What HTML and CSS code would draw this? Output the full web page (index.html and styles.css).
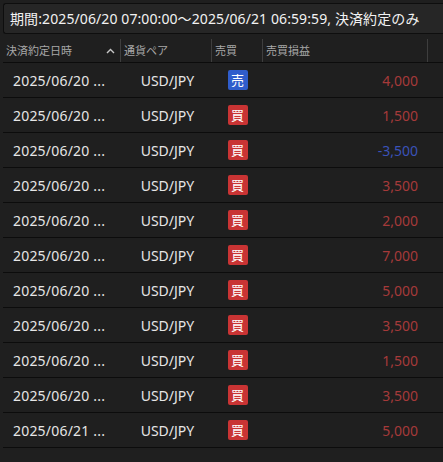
FILE: index.html
```html
<!DOCTYPE html>
<html lang="ja">
<head>
<meta charset="utf-8">
<link rel="stylesheet" href="styles.css">
</head>
<body>
<div class="page">
  <div class="filter">期間:2025/06/20 07:00:00〜2025/06/21 06:59:59, 決済約定のみ</div>
  <div class="table">
    <div class="row head">
      <div class="hc c1"><span>決済約定日時</span><svg class="sort" width="9" height="6" viewBox="0 0 9 6"><path d="M1 5 L4.5 1.5 L8 5" fill="none" stroke="#c8c8c8" stroke-width="1.4"/></svg></div>
      <div class="hc">通貨ペア</div>
      <div class="hc">売買</div>
      <div class="hc">売買損益</div>
      <div class="hc last"></div>
    </div>
    <div class="row"><div class="c date">2025/06/20 ...</div><div class="c pair">USD/JPY</div><div class="c side"><span class="badge sell">売</span></div><div class="c pl red">4,000</div><div class="c"></div></div>
    <div class="row"><div class="c date">2025/06/20 ...</div><div class="c pair">USD/JPY</div><div class="c side"><span class="badge buy">買</span></div><div class="c pl red">1,500</div><div class="c"></div></div>
    <div class="row"><div class="c date">2025/06/20 ...</div><div class="c pair">USD/JPY</div><div class="c side"><span class="badge buy">買</span></div><div class="c pl blue">-3,500</div><div class="c"></div></div>
    <div class="row"><div class="c date">2025/06/20 ...</div><div class="c pair">USD/JPY</div><div class="c side"><span class="badge buy">買</span></div><div class="c pl red">3,500</div><div class="c"></div></div>
    <div class="row"><div class="c date">2025/06/20 ...</div><div class="c pair">USD/JPY</div><div class="c side"><span class="badge buy">買</span></div><div class="c pl red">2,000</div><div class="c"></div></div>
    <div class="row"><div class="c date">2025/06/20 ...</div><div class="c pair">USD/JPY</div><div class="c side"><span class="badge buy">買</span></div><div class="c pl red">7,000</div><div class="c"></div></div>
    <div class="row"><div class="c date">2025/06/20 ...</div><div class="c pair">USD/JPY</div><div class="c side"><span class="badge buy">買</span></div><div class="c pl red">5,000</div><div class="c"></div></div>
    <div class="row"><div class="c date">2025/06/20 ...</div><div class="c pair">USD/JPY</div><div class="c side"><span class="badge buy">買</span></div><div class="c pl red">3,500</div><div class="c"></div></div>
    <div class="row"><div class="c date">2025/06/20 ...</div><div class="c pair">USD/JPY</div><div class="c side"><span class="badge buy">買</span></div><div class="c pl red">1,500</div><div class="c"></div></div>
    <div class="row"><div class="c date">2025/06/20 ...</div><div class="c pair">USD/JPY</div><div class="c side"><span class="badge buy">買</span></div><div class="c pl red">3,500</div><div class="c"></div></div>
    <div class="row"><div class="c date">2025/06/21 ...</div><div class="c pair">USD/JPY</div><div class="c side"><span class="badge buy">買</span></div><div class="c pl red">5,000</div><div class="c"></div></div>
  </div>
</div>
</body>
</html>
```
FILE: styles.css
```css
html, body {
  margin: 0;
  padding: 0;
  background: #1f1f1f;
  width: 443px;
  height: 462px;
  overflow: hidden;
}
.page {
  padding: 3px 0 0 3px;
  font-family: "Noto Sans", "Noto Sans CJK JP", sans-serif;
  color: #e8e8e8;
}
.filter {
  height: 29px;
  border: 1px solid #0e0e0e;
  border-right: none;
  border-radius: 3px 0 0 3px;
  background: #262626;
  box-sizing: content-box;
  font-size: 14px;
  line-height: 29px;
  padding-left: 6px;
  letter-spacing: 0.1px;
  white-space: nowrap;
  color: #f2f2f2;
}
.table {
  margin-top: 5px;
}
.row {
  display: grid;
  grid-template-columns: 118px 91px 51px 165px 1fr;
  height: 34px;
  border-bottom: 1px solid #0c0c0c;
  align-items: center;
}
.row.head {
  height: 23px;
  margin-top: 2px;
  align-items: stretch;
}
.hc {
  font-size: 11px;
  color: #a8a8a8;
  line-height: 23px;
  padding-left: 3px;
  border-right: 1px solid #3e3e3e;
  white-space: nowrap;
}
.hc.last { border-right: none; }
.c1 {
  display: flex;
  align-items: center;
  justify-content: space-between;
  padding-right: 5px;
}
.sort { margin-top: 1px; }
.c {
  font-size: 14px;
  white-space: nowrap;
}
.date { padding-left: 10px; color: #e6e6e6; letter-spacing: 0.2px; }
.pair { text-align: center; color: #e6e6e6; padding-left: 2px; }
.side { display: flex; justify-content: center; padding-left: 0; }
.badge {
  width: 20px;
  height: 20px;
  border-radius: 2px;
  color: #fff;
  font-size: 13px;
  line-height: 20px;
  text-align: center;
}
.badge.buy { background: #c93434; }
.badge.sell { background: #2f5dcc; }
.pl { text-align: right; padding-right: 10px; }
.red { color: #a53a3a; }
.blue { color: #3a52b8; }
```
